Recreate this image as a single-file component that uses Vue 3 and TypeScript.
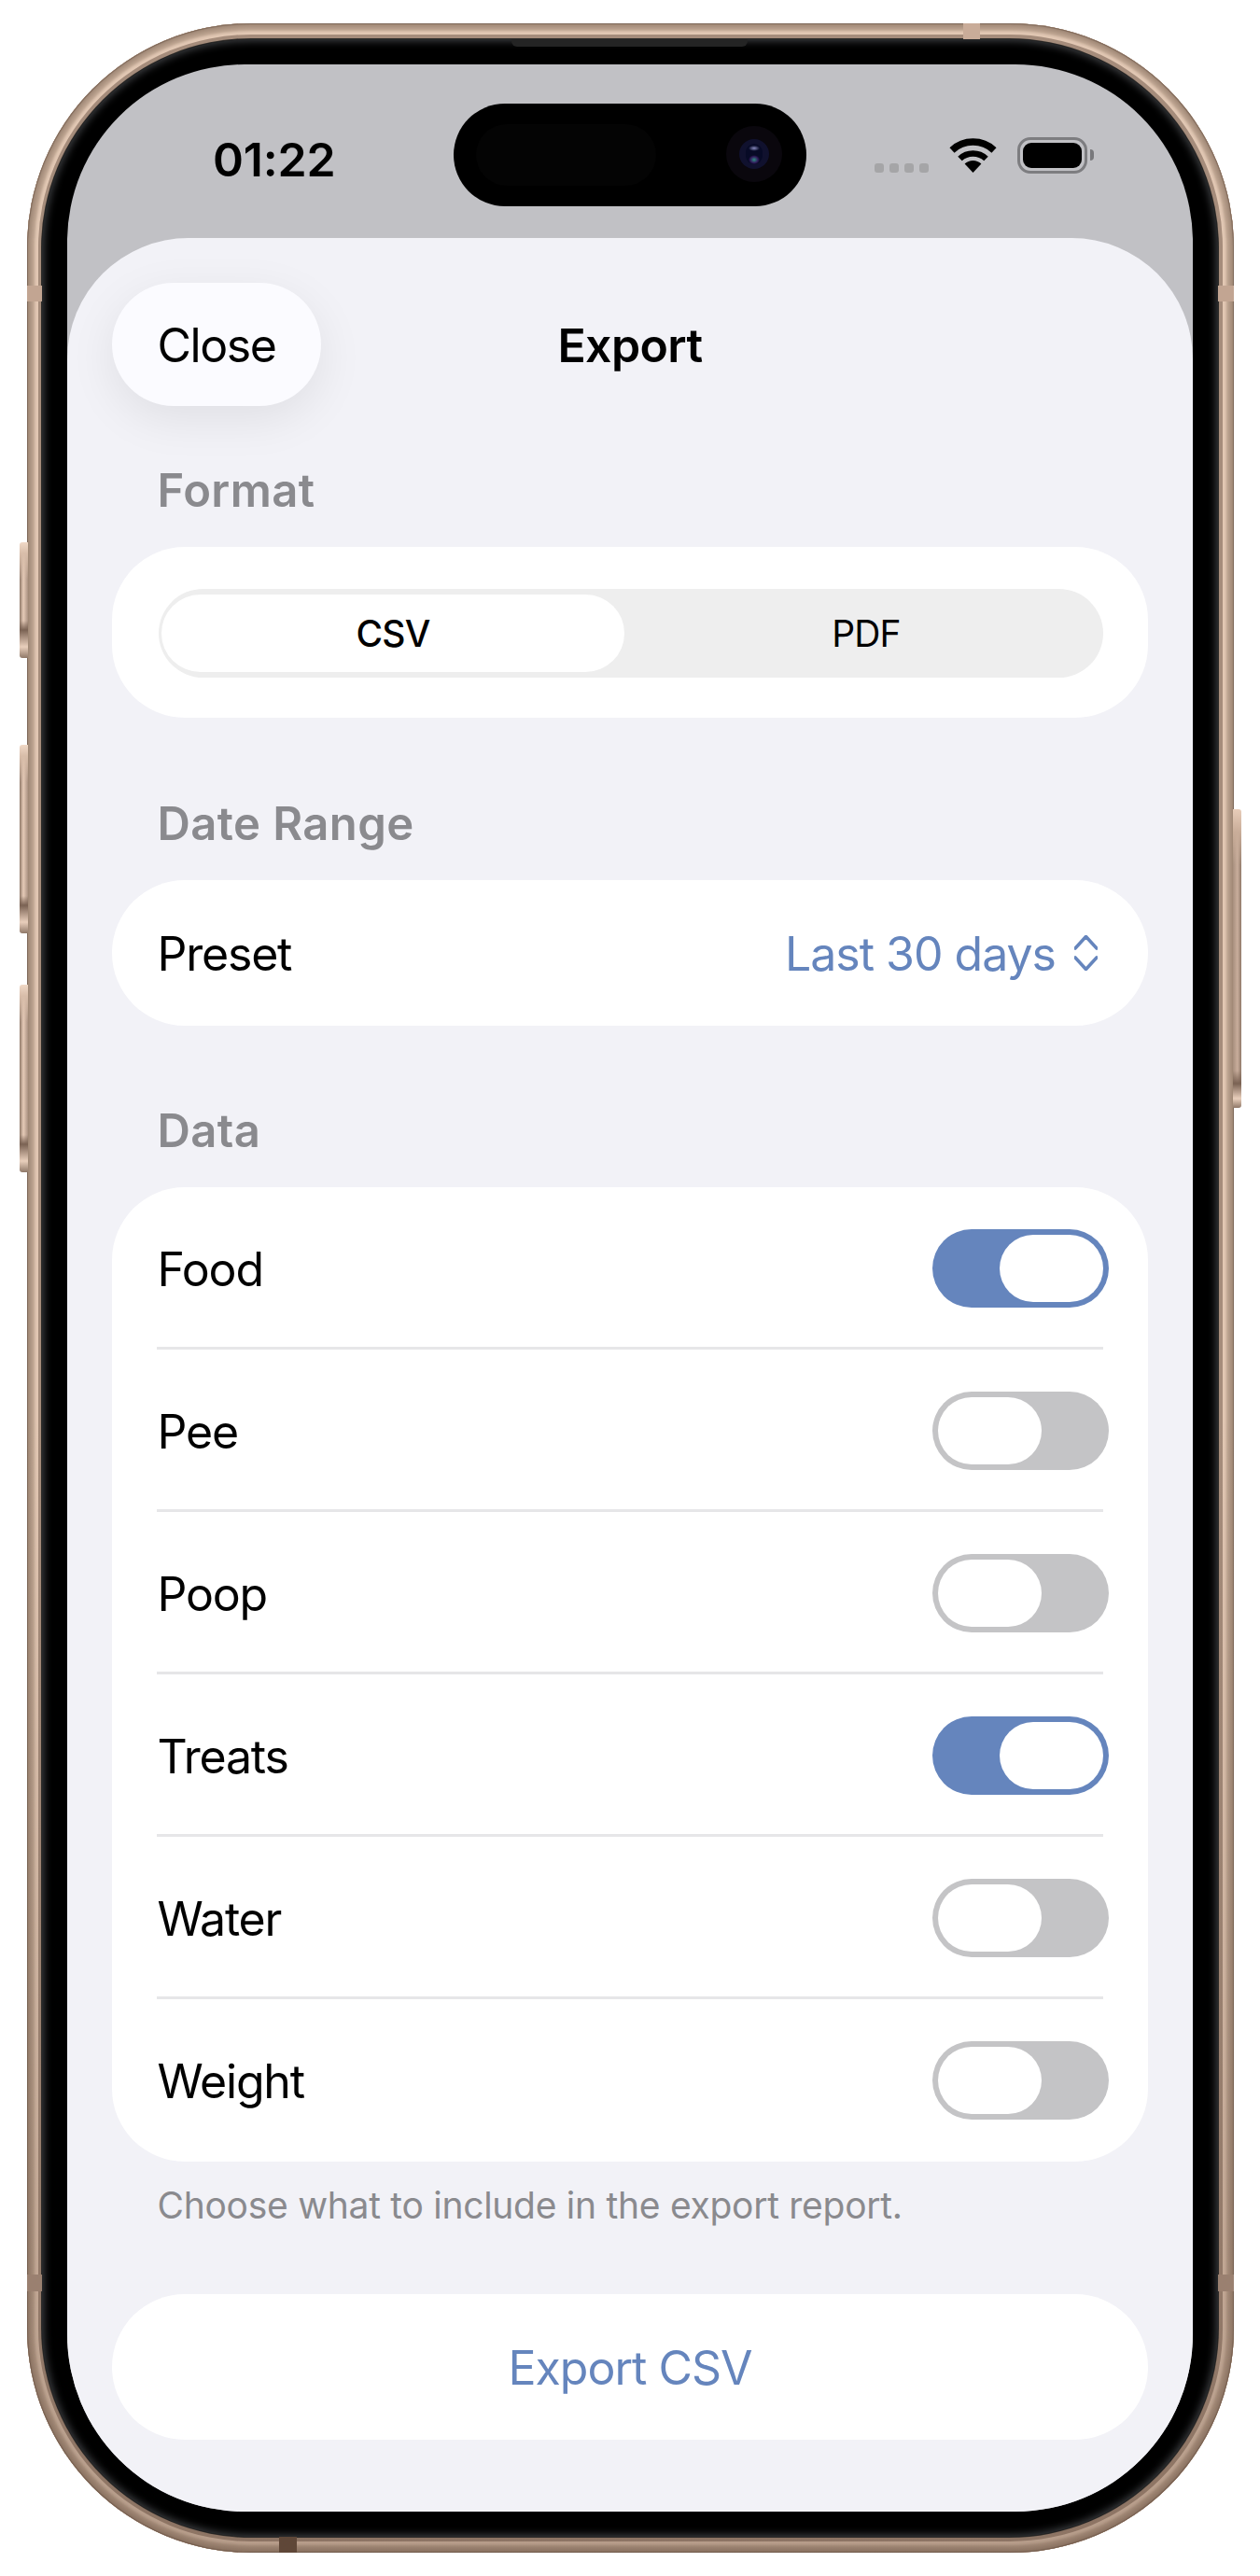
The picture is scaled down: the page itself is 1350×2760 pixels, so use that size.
<script setup lang="ts">
interface DataRow {
  label: string
  on: boolean
}

const rows: DataRow[] = [
  { label: 'Food', on: true },
  { label: 'Pee', on: false },
  { label: 'Poop', on: false },
  { label: 'Treats', on: true },
  { label: 'Water', on: false },
  { label: 'Weight', on: false },
]
</script>

<template>
  <div class="page">
    <div class="device">
      <span class="side btn-action"></span>
      <span class="side btn-up"></span>
      <span class="side btn-down"></span>
      <span class="side btn-power"></span>
      <span class="band band-top"></span>
      <span class="band band-l1"></span>
      <span class="band band-r1"></span>
      <span class="band band-l2"></span>
      <span class="band band-r2"></span>
      <span class="band band-bottom"></span>
      <div class="bezel">
        <span class="speaker"></span>
        <div class="screen">
          <div class="status">
            <div class="time">01:22</div>
            <div class="island">
              <span class="sensor"></span>
              <span class="camera"><span class="ring"><span class="lens"></span></span></span>
            </div>
            <div class="indicators">
              <div class="dots"><i></i><i></i><i></i><i></i></div>
              <svg class="wifi" width="51" height="37" viewBox="0 0 51 37" aria-hidden="true">
                <path d="M25.5 37 16.6 27.5A13 13 0 0 1 34.4 27.5Z" fill="#000" />
                <path d="M11.5 22A20.5 20.5 0 0 1 39.5 22" fill="none" stroke="#000" stroke-width="6.5" />
                <path d="M3 12.9A33 33 0 0 1 48 12.9" fill="none" stroke="#000" stroke-width="7.5" />
              </svg>
              <div class="battery"><span class="charge"></span></div>
              <span class="cap"></span>
            </div>
          </div>

          <div class="sheet">
            <header class="head">
              <button class="close" type="button">Close</button>
              <h1 class="title">Export</h1>
            </header>

            <h2 class="label first">Format</h2>
            <section class="card format">
              <div class="segments">
                <div class="seg active">CSV</div>
                <div class="seg">PDF</div>
              </div>
            </section>

            <h2 class="label">Date Range</h2>
            <section class="card preset">
              <span class="row-text">Preset</span>
              <span class="picker">
                <span>Last 30 days</span>
                <svg width="25" height="38" viewBox="0 0 25 38" aria-hidden="true">
                  <path d="M1 14 12.5 1.5 24 14M1 24 12.5 36.5 24 24" fill="none" stroke="currentColor" stroke-width="3.6" stroke-linecap="round" stroke-linejoin="round" />
                </svg>
              </span>
            </section>

            <h2 class="label">Data</h2>
            <section class="card data">
              <div v-for="row in rows" :key="row.label" class="row">
                <span class="row-text">{{ row.label }}</span>
                <span class="toggle" :class="{ on: row.on }"><span class="thumb"></span></span>
              </div>
            </section>
            <p class="caption">Choose what to include in the export report.</p>

            <button class="card export" type="button">Export CSV</button>
          </div>
        </div>
      </div>
    </div>
  </div>
</template>

<style scoped>
.page {
  width: 1350px;
  height: 2760px;
  padding-top: 25px;
  box-sizing: border-box;
  background: #fff;
  font-family: Inter, "Liberation Sans", sans-serif;
  color: #000;
}
.device {
  position: relative;
  width: 1293px;
  height: 2710px;
  margin: 0 auto;
  padding: 17px 16.5px;
  box-sizing: border-box;
  border-radius: 240px;
  background: #a58c7b;
  box-shadow:
    inset 0 0 1px 1px #7d6758,
    inset 0 0 3px 4px #a58d7b,
    inset 0 0 3px 8px #b9a08d,
    inset 0 0 0 12px #e2c8b4,
    inset 0 0 0 17px #a58c7b;
}
.device::before {
  content: "";
  position: absolute;
  inset: 0;
  border-radius: 240px;
  background: linear-gradient(180deg, rgba(90, 65, 50, 0) 55%, rgba(90, 65, 50, 0.32) 100%);
}
.side {
  position: absolute;
  width: 9px;
  background:
    linear-gradient(180deg, #f0d8c6 0, #d8bda9 12px, rgba(0, 0, 0, 0) 40px, rgba(0, 0, 0, 0) calc(100% - 40px), #7a6253 calc(100% - 30px), #e9cfbc calc(100% - 12px), #8f7868 100%),
    linear-gradient(90deg, #8f7868, #e6cbb8 45%, #ab9282);
  border-radius: 3px 0 0 3px;
}
.btn-action { left: -8px; top: 556px; height: 124px; }
.btn-up { left: -8px; top: 773px; height: 202px; }
.btn-down { left: -8px; top: 1030px; height: 201px; }
.btn-power {
  right: -8px;
  top: 842px;
  height: 320px;
  background:
    linear-gradient(180deg, #e8cdb9 0, #c9ad99 24px, rgba(0, 0, 0, 0) 60px, rgba(0, 0, 0, 0) calc(100% - 40px), #7a6253 calc(100% - 26px), #e9cfbc calc(100% - 10px), #8f7868 100%),
    linear-gradient(270deg, #8f7868, #c9ae9c 45%, #a88f7e);
  border-radius: 0 3px 3px 0;
}
.band { position: absolute; z-index: 1; }
.band-top { left: 1003px; top: 0; width: 18px; height: 17px; background: #c9ac99; }
.band-l1 { left: 0; top: 281px; width: 16.5px; height: 17px; background: #c2a592; }
.band-r1 { right: 0; top: 281px; width: 16.5px; height: 17px; background: #c2a592; }
.band-l2 { left: 0; top: 2412px; width: 16.5px; height: 18px; background: #9a8070; }
.band-r2 { right: 0; top: 2412px; width: 16.5px; height: 18px; background: #9a8070; }
.band-bottom { left: 270px; bottom: 0; width: 19px; height: 17px; background: #5f4738; }

.bezel {
  position: relative;
  height: 100%;
  padding: 27px;
  box-sizing: border-box;
  border-radius: 224px;
  background: #000;
  box-shadow:
    0 0 0 1px #2c2a28,
    inset 0 0 9px 2px #3f4144;
}
.speaker {
  position: absolute;
  left: 503px;
  top: 0;
  width: 253px;
  height: 8px;
  background: #242424;
  border-radius: 0 0 6px 6px;
}
.screen {
  height: 100%;
  display: flex;
  flex-direction: column;
  overflow: hidden;
  border-radius: 190px;
  background: #c1c1c5;
}
.status {
  height: 186px;
  flex: none;
  position: relative;
}
.time {
  position: absolute;
  left: 156px;
  top: 72px;
  font-size: 50px;
  line-height: 60px;
  font-weight: 600;
  letter-spacing: -0.2px;
}
.island {
  position: absolute;
  left: 414px;
  top: 42px;
  width: 378px;
  height: 110px;
  border-radius: 55px;
  background: #000;
}
.sensor {
  position: absolute;
  left: 24px;
  top: 22px;
  width: 193px;
  height: 66px;
  border-radius: 33px;
  background: #040404;
}
.camera {
  position: absolute;
  left: 292px;
  top: 24px;
  width: 60px;
  height: 60px;
  padding: 14px;
  box-sizing: border-box;
  border-radius: 50%;
  background: #0a070d;
}
.ring {
  display: block;
  width: 32px;
  height: 32px;
  padding: 5px 7px;
  box-sizing: border-box;
  border-radius: 50%;
  background: #10112e;
}
.lens {
  display: block;
  width: 18px;
  height: 22px;
  border-radius: 9px;
  background:
    radial-gradient(ellipse 6px 3px at 50% 22%, #8a8cc0, rgba(0, 0, 0, 0)),
    radial-gradient(ellipse 6px 5px at 50% 78%, #2f8f84, rgba(90, 40, 140, 0.5) 70%, rgba(0, 0, 0, 0)),
    #070a26;
}
.indicators {
  position: absolute;
  left: 865px;
  top: 78px;
  display: flex;
  align-items: flex-start;
}
.dots {
  display: flex;
  gap: 6px;
  margin-top: 28px;
  margin-right: 22px;
}
.dots i {
  width: 10px;
  height: 10px;
  border-radius: 3px;
  background: #a5a5a7;
}
.wifi { flex: none; margin-top: 1px; }
.battery {
  width: 75px;
  height: 39px;
  margin-left: 22px;
  padding: 3px;
  box-sizing: border-box;
  border: 3px solid #7d7d80;
  border-radius: 14px;
}
.charge {
  display: block;
  height: 100%;
  border-radius: 9px;
  background: #000;
}
.cap {
  width: 4px;
  height: 12px;
  margin: 13px 0 0 3px;
  border-radius: 0 4px 4px 0;
  background: #79797c;
}

.sheet {
  flex: 1;
  padding: 48px 48px 0;
  border-radius: 130px 130px 0 0;
  background: #f2f2f7;
}
.head {
  position: relative;
  display: flex;
  align-items: center;
  height: 132px;
}
.close {
  width: 224px;
  height: 132px;
  padding: 2px 0 0;
  border: 0;
  border-radius: 66px;
  background: #fbfbff;
  box-shadow: 0 14px 50px rgba(0, 0, 0, 0.08);
  font: inherit;
  font-size: 50px;
  letter-spacing: -1.4px;
  color: #000;
}
.title {
  position: absolute;
  left: 0;
  right: 0;
  margin: 2px 0 0;
  text-align: center;
  font-size: 50px;
  font-weight: 600;
  letter-spacing: -0.6px;
}
.label {
  margin: 83.5px 0 30px 48.5px;
  font-size: 49px;
  line-height: 60px;
  font-weight: 600;
  letter-spacing: 0.4px;
  color: #8a8a8e;
}
.label.first { margin-top: 61px; }
.card {
  display: block;
  width: 1110px;
  background: #fff;
  border-radius: 78px;
}
.format {
  height: 183px;
  padding: 45px 48px 0 50px;
  box-sizing: border-box;
}
.segments {
  display: grid;
  grid-template-columns: 496px 1fr;
  gap: 5px;
  height: 95px;
  padding: 6px 0 6px 3px;
  box-sizing: border-box;
  border-radius: 48px;
  background: #eeeeee;
}
.seg {
  display: flex;
  align-items: center;
  justify-content: center;
  border-radius: 42px;
  font-size: 39px;
  font-weight: 400;
  letter-spacing: -0.8px;
}
.seg.active {
  background: #fff;
  font-weight: 500;
}
.preset {
  height: 156px;
  display: flex;
  align-items: center;
  justify-content: space-between;
  padding: 2px 54px 0 48.5px;
  box-sizing: border-box;
}
.preset svg {
  margin-top: -2px;
}
.row-text {
  font-size: 50px;
  letter-spacing: -1.2px;
}
.picker {
  display: flex;
  align-items: center;
  gap: 20px;
  color: #6585bd;
  font-size: 50px;
  letter-spacing: -1px;
}
.row {
  position: relative;
  height: 174px;
  display: flex;
  align-items: center;
  justify-content: space-between;
  padding: 0 42px 0 48.5px;
  box-sizing: border-box;
}
.row .row-text {
  padding-top: 2px;
}
.row + .row::before {
  content: "";
  position: absolute;
  left: 48px;
  right: 48px;
  top: -3px;
  height: 3px;
  background: #e6e6e8;
}
.toggle {
  display: flex;
  justify-content: flex-start;
  width: 189px;
  height: 84px;
  padding: 6px;
  box-sizing: border-box;
  border-radius: 42px;
  background: #c4c4c6;
}
.toggle.on {
  justify-content: flex-end;
  background: #6585bd;
}
.thumb {
  width: 111px;
  height: 72px;
  border-radius: 36px;
  background: #fff;
}
.caption {
  margin: 23px 0 71px 48.5px;
  font-size: 39px;
  line-height: 48px;
  letter-spacing: -0.28px;
  color: #8a8a8e;
}
.export {
  height: 156px;
  padding: 2px 0 0;
  border: 0;
  font: inherit;
  font-size: 50px;
  letter-spacing: -1px;
  color: #6585bd;
  text-align: center;
}
</style>

<style>
html, body { margin: 0; background: #fff; }
</style>
